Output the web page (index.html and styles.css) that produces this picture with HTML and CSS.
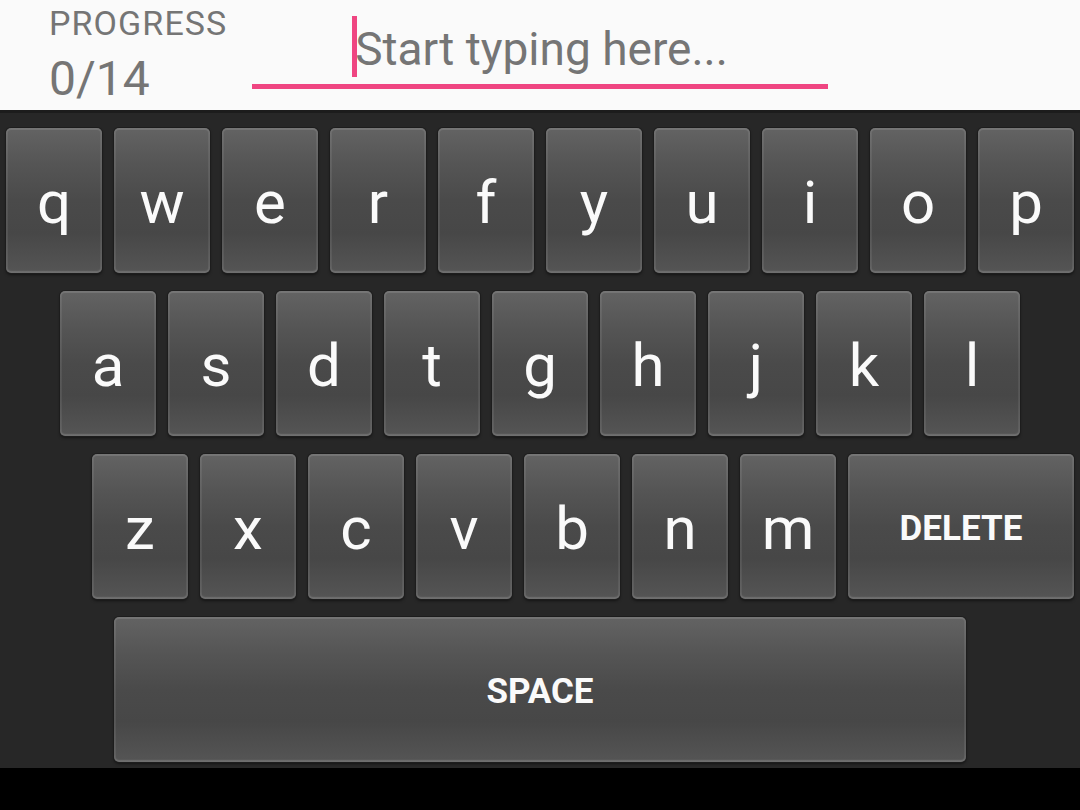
FILE: index.html
```html
<!DOCTYPE html>
<html>
<head>
<meta charset="utf-8">
<link rel="stylesheet" href="styles.css">
</head>
<body>
<header class="topbar">
  <div class="progress">
    <div class="progress-label">PROGRESS</div>
    <div class="progress-value">0/14</div>
  </div>
  <div class="input">
    <span class="cursor"></span><span class="hint">Start typing here...</span>
  </div>
</header>
<main class="keyboard">
  <div class="row row1">
    <div class="key">q</div><div class="key">w</div><div class="key">e</div><div class="key">r</div><div class="key">f</div><div class="key">y</div><div class="key">u</div><div class="key">i</div><div class="key">o</div><div class="key">p</div>
  </div>
  <div class="row row2">
    <div class="key">a</div><div class="key">s</div><div class="key">d</div><div class="key">t</div><div class="key">g</div><div class="key">h</div><div class="key">j</div><div class="key">k</div><div class="key">l</div>
  </div>
  <div class="row row3">
    <div class="key">z</div><div class="key">x</div><div class="key">c</div><div class="key">v</div><div class="key">b</div><div class="key">n</div><div class="key">m</div><div class="key key-wide label">DELETE</div>
  </div>
  <div class="row row4">
    <div class="key key-space label">SPACE</div>
  </div>
</main>
<footer class="navbar"></footer>
</body>
</html>
```
FILE: styles.css
```css
html, body {
  margin: 0;
  padding: 0;
  width: 1080px;
  height: 810px;
  overflow: hidden;
  font-family: Roboto, "Liberation Sans", sans-serif;
}

.topbar {
  height: 110px;
  background: #fafafa;
  display: flex;
  align-items: flex-start;
  padding-left: 49px;
  box-sizing: border-box;
}

.progress {
  width: 203px;
  color: #757575;
}

.progress-label {
  font-size: 34px;
  line-height: 38px;
  letter-spacing: 1.1px;
  margin-top: 4px;
}

.progress-value {
  font-size: 48px;
  line-height: 56px;
  margin-top: 9px;
}

.input {
  width: 576px;
  height: 84px;
  border-bottom: 5px solid #ef4581;
  display: flex;
  justify-content: center;
  align-items: flex-start;
}

.cursor {
  display: block;
  width: 5px;
  height: 61px;
  margin-top: 16px;
  margin-right: -2px;
  background: #ef4581;
}

.hint {
  display: block;
  font-size: 46px;
  line-height: 54px;
  margin-top: 22px;
  color: #757575;
}

.keyboard {
  height: 658px;
  box-sizing: border-box;
  background: #272727;
  border-top: 3px solid #1c1c1c;
  padding-top: 15px;
  display: flex;
  flex-direction: column;
  gap: 18px;
}

.row {
  display: flex;
  gap: 12px;
  height: 145px;
}

.row1 { padding-left: 6px; }
.row2 { padding-left: 60px; }
.row3 { padding-left: 92px; }
.row4 { padding-left: 114px; }

.key {
  width: 96px;
  height: 145px;
  box-sizing: border-box;
  padding-top: 3px;
  border-radius: 5px;
  background: linear-gradient(#636363 0%, #555555 25%, #4a4a4a 50%, #474747 72%, #555555 100%);
  box-shadow:
    0 0 0 1px #1d1d1d,
    0 2px 3px rgba(0, 0, 0, 0.5),
    inset 0 0 0 2px rgba(255, 255, 255, 0.07),
    inset 0 -2px 2px rgba(255, 255, 255, 0.10),
    inset 0 2px 1px rgba(255, 255, 255, 0.06);
  color: #fafafa;
  font-size: 60px;
  display: flex;
  align-items: center;
  justify-content: center;
}

.label {
  font-size: 35px;
  font-weight: bold;
}

.key-wide { width: 226px; }
.key-space { width: 852px; }

.navbar {
  height: 42px;
  background: #000;
}
```
